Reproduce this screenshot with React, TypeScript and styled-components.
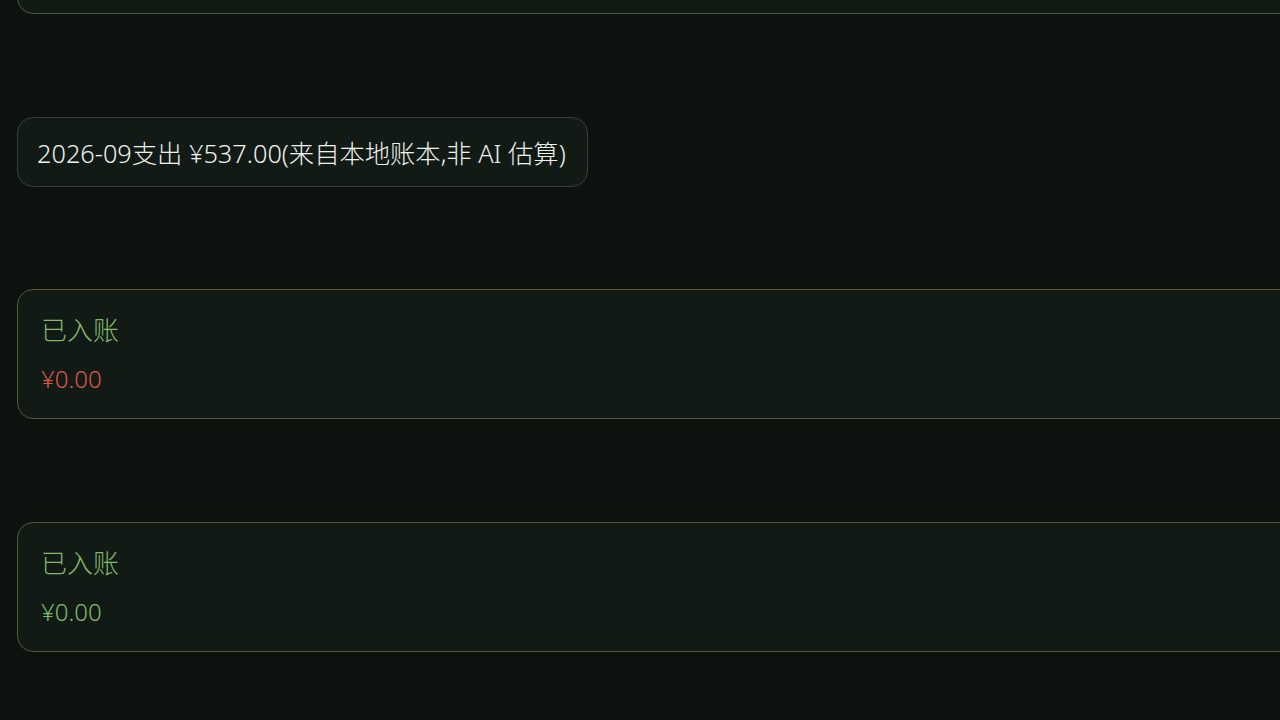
import React from "react";
import styled, { createGlobalStyle } from "styled-components";

const GlobalStyle = createGlobalStyle`
  html, body {
    margin: 0;
    padding: 0;
    background: #0e120f;
    overflow: hidden;
  }
  body {
    font-family: "Noto Sans", "Noto Sans CJK SC", sans-serif;
    font-weight: 300;
    color: #e8ece6;
  }
`;

const Page = styled.div`
  display: flex;
  flex-direction: column;
  align-items: flex-start;
  gap: 102.5px;
  padding: 0 0 0 17px;
  margin-top: -116px;
  width: 1300px;
`;

const Card = styled.div`
  box-sizing: border-box;
  width: 1290px;
  height: 130px;
  padding: 24px 23px;
  background: #121a16;
  border: 1.5px solid #57573a;
  border-radius: 16px;
  display: flex;
  flex-direction: column;
  gap: 17px;
`;

const Pill = styled.div`
  box-sizing: border-box;
  height: 70px;
  padding: 0 21px 0 19px;
  display: flex;
  align-items: center;
  background: #121a16;
  border: 1.5px solid #3c4034;
  border-radius: 16px;
  font-size: 25.3px;
  color: #eef1ec;
`;

const Label = styled.div`
  font-size: 26px;
  line-height: 32px;
  color: #80bb6c;
`;

const Amount = styled.div<{ $tone: "red" | "green" }>`
  font-size: 24px;
  line-height: 32px;
  color: ${(p) => (p.$tone === "red" ? "#d8584a" : "#80bb6c")};
`;

const entries: { label: string; amount: string; tone: "red" | "green" }[] = [
  { label: "已入账", amount: "¥0.00", tone: "red" },
  { label: "已入账", amount: "¥0.00", tone: "green" },
];

export default function App() {
  return (
    <>
      <GlobalStyle />
      <Page>
        <Card />
        <Pill>2026-09支出 ¥537.00(来自本地账本,非 AI 估算)</Pill>
        {entries.map((e, i) => (
          <Card key={i}>
            <Label>{e.label}</Label>
            <Amount $tone={e.tone}>{e.amount}</Amount>
          </Card>
        ))}
      </Page>
    </>
  );
}
